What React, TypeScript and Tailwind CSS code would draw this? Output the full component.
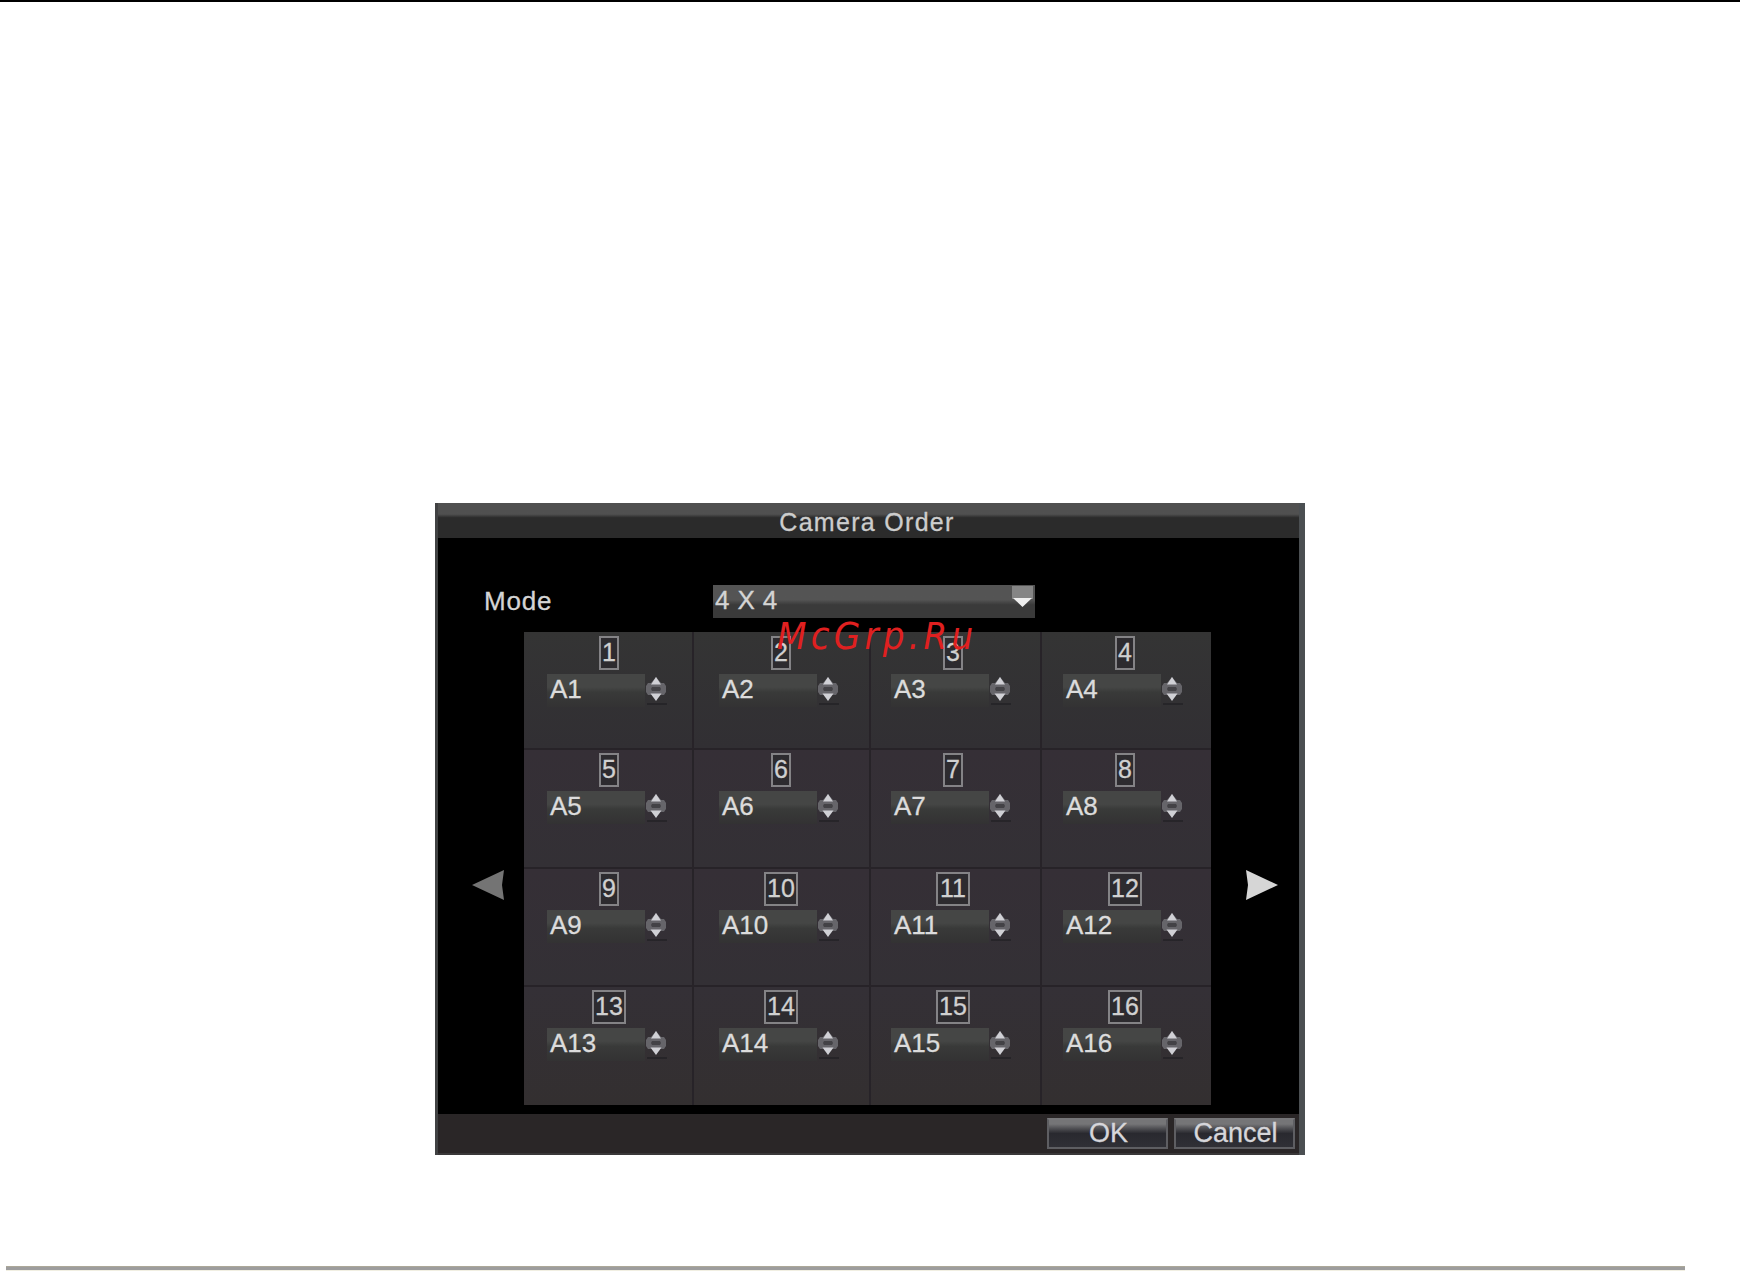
import React from "react";
import clsx from "clsx";

const ROWS = [
  [1, 2, 3, 4],
  [5, 6, 7, 8],
  [9, 10, 11, 12],
  [13, 14, 15, 16],
];

// grid lines are not evenly spaced, the camera fields are
const COLUMN_PADDING = ["pl-[23px]", "pl-[25px]", "pl-[20px]", "pl-[21px]"];
const ROW_PADDING = ["pt-[4px]", "pt-[3px]", "pt-[3px]", "pt-[3px]"];

function SpinnerArrows() {
  return (
    <svg width="24" height="30" viewBox="0 0 24 30" className="-ml-px shrink-0">
      <path d="M12 2 L17 8 H20 L22 11 V17 L20 20 H4 L2 17 V11 L4 8 H7 Z" fill="#66656a" />
      <path d="M8 12 H16 L17 14 L16 16 H8 L7 14 Z" fill="#434246" />
      <path d="M12 2 L17 9.5 H7 Z" fill="#d0d0d5" />
      <path d="M12 26 L17.5 18.5 H6.5 Z" fill="#d0d0d5" />
      <path d="M3 29 H23" stroke="#232226" strokeWidth="1.5" />
    </svg>
  );
}

function CameraCell({ channel, row, col }: { channel: number; row: number; col: number }) {
  return (
    <div
      className={clsx(
        "flex flex-col items-start bg-linear-to-b",
        row === 0 ? "from-[#343434] to-[#312f33]" : row === 3 ? "from-[#343036] to-[#332f30]" : "from-[#352f36] to-[#333035]",
        col < 3 && "border-r-2 border-r-[#272328]",
        row < 3 && "border-b-2 border-b-[#272328]",
        COLUMN_PADDING[col],
        ROW_PADDING[row]
      )}
    >
      <div className="flex w-[124px] justify-center">
        <span
          className={clsx(
            "flex h-[34px] items-center justify-center border-2 border-[#848386] bg-[#2d2b2f] pb-px text-[25px] leading-none text-[#d0d0d0]",
            channel < 10 ? "w-[20px]" : "w-[34px]"
          )}
        >
          {channel}
        </span>
      </div>
      <div className="mt-[3px] flex h-[34px] items-center">
        <div className="flex h-[33px] w-[98px] items-center bg-linear-to-b from-[#454645] from-40% via-[#393a39] via-55% to-[#333233] pb-[2px] pl-[3px] text-[26px] leading-none text-[#dcdcdc]">
          A{channel}
        </div>
        <SpinnerArrows />
      </div>
    </div>
  );
}

function PageArrow({ direction }: { direction: "left" | "right" }) {
  return (
    <svg width="34" height="32" viewBox="0 0 34 32">
      {direction === "left" ? (
        <path d="M1 16 L33 1 L31 16 L33 31 Z" fill="#747474" />
      ) : (
        <path d="M33 16 L1 1 L3 16 L1 31 Z" fill="#d6d6d6" />
      )}
    </svg>
  );
}

function DialogButton({ label }: { label: string }) {
  return (
    <button className="flex h-[31px] w-[121px] items-center justify-center border-2 border-[#5e5e62] border-t-[#77777a] bg-linear-to-b from-[#757577] from-15% via-[#29292f] via-50% to-[#303036] text-[27px] leading-none text-[#d6d6da] [-webkit-text-stroke:0.3px]">
      <span className="pl-[2px]">{label}</span>
    </button>
  );
}

function CameraOrderDialog() {
  return (
    <section className="flex h-[652px] w-[870px] flex-col border-r-[6px] border-l-[3px] border-r-[#4b4f52] border-l-[#414243] bg-black [-webkit-text-stroke:0.3px]">
      <header className="flex h-[35px] shrink-0 justify-center bg-linear-to-b from-[#505050] from-32% to-[#2b2b2b] to-42% pt-[5px] pr-[3px] text-[25px] leading-[28px] tracking-[1.3px] text-[#cdcdcd]">
        Camera Order
      </header>

      <div className="mt-[47px] flex h-[33px] shrink-0 items-center pl-[46px] text-[26px] leading-none text-[#d4d4d4]">
        <span className="w-[229px] pb-[2px] tracking-[0.8px]">Mode</span>
        <div className="flex h-full w-[322px] justify-between bg-linear-to-b from-[#545454] from-45% to-[#3a3a3a] to-60% pr-[2px] pl-[2px]">
          <span className="leading-[31px] tracking-[0.4px]">4 X 4</span>
          <svg width="21" height="33" viewBox="0 0 21 33">
            <rect y="1" width="21" height="13" fill="#858585" />
            <path d="M1 13 H20 L10.5 22 Z" fill="#eeeeee" />
          </svg>
        </div>
      </div>

      <div className="mt-[14px] flex h-[473px] shrink-0">
        <div className="flex w-[86px] items-center justify-end pt-[33px] pr-[19px]">
          <PageArrow direction="left" />
        </div>
        <div className="grid w-[687px] grid-cols-[170px_177px_171px_169px] grid-rows-[118px_119px_118px_118px]">
          {ROWS.map((channels, row) =>
            channels.map((channel, col) => (
              <CameraCell key={channel} channel={channel} row={row} col={col} />
            ))
          )}
        </div>
        <div className="flex flex-1 items-center pt-[33px] pl-[34px]">
          <PageArrow direction="right" />
        </div>
      </div>

      <footer className="mt-[9px] flex flex-1 items-center justify-end gap-[6px] border-b-2 border-[#3a3839] bg-[#2a2627] pr-[4px]">
        <DialogButton label="OK" />
        <DialogButton label="Cancel" />
      </footer>
    </section>
  );
}

export default function App() {
  return (
    <main className="relative flex h-[1271px] w-[1740px] flex-col overflow-hidden border-t-2 border-black bg-white font-['Liberation_Sans',Arial,sans-serif]">
      <div className="mt-[501px] ml-[435px]">
        <CameraOrderDialog />
      </div>

      {/* site watermark */}
      <span className="absolute top-[612px] left-[777px] font-['DejaVu_Sans_Condensed','DejaVu_Sans',sans-serif] text-[38px] leading-[44px] tracking-[4.2px] text-[#e02020] italic [font-stretch:condensed]">
        McGrp.Ru
      </span>

      <div className="mt-auto ml-[6px] h-[5px] w-[1679px] border-t border-b border-t-[#aca899] border-b-[#f1efe2] bg-[#9d9d9d]" />
    </main>
  );
}
